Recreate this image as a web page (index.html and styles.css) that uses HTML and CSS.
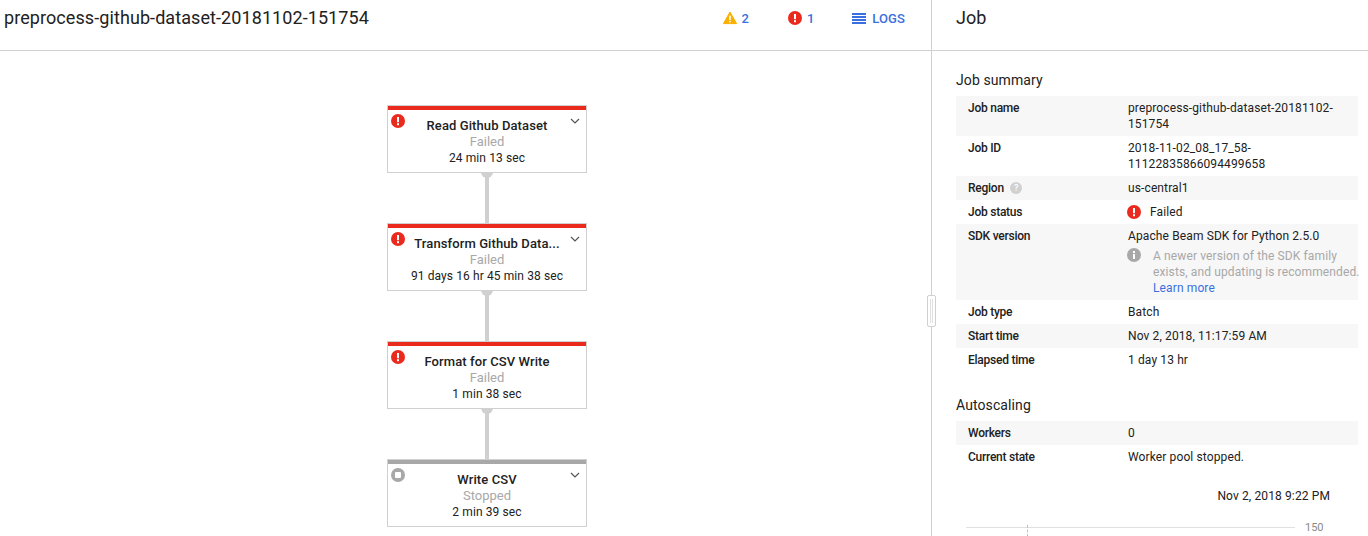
FILE: index.html
```html
<!DOCTYPE html>
<html lang="en">
<head>
    <meta charset="UTF-8">
    <title>Dataflow job</title>
    <link rel="stylesheet" href="styles.css">
</head>
<body>
<div class="page">
    <div class="main">
        <div class="topbar">
            <h1 class="job-title">preprocess-github-dataset-20181102-151754</h1>
            <div class="top-actions">
                <span class="top-item warn-item">
                    <svg class="top-icon" viewBox="0 0 14 14" width="14" height="14"><path d="M7 1 L13.6 12.6 H0.4 Z" fill="#fbb000" stroke="#fbb000" stroke-width="1" stroke-linejoin="round"/><rect x="6.2" y="4.6" width="1.6" height="4.4" fill="#fff"/><rect x="6.2" y="9.8" width="1.6" height="1.6" fill="#fff"/></svg>
                    2
                </span>
                <span class="top-item err-item">
                    <svg class="top-icon" viewBox="0 0 14 14" width="14" height="14"><circle cx="7" cy="7" r="7" fill="#ea2a1c"/><rect x="6" y="3" width="2" height="5.2" fill="#fff"/><rect x="6" y="9.2" width="2" height="2" fill="#fff"/></svg>
                    1
                </span>
                <span class="top-item logs-item">
                    <svg viewBox="0 0 14 11" width="14" height="11"><path d="M0 0h14v2H0zM0 3h14v2H0zM0 6h14v2H0zM0 9h14v2H0z" fill="#3b6fe0"/></svg>
                    LOGS
                </span>
            </div>
        </div>
        <div class="graph">
            <div class="node failed">
                <svg class="node-icon" viewBox="0 0 14 14" width="14" height="14"><circle cx="7" cy="7" r="7" fill="#ea2a1c"/><rect x="6" y="3" width="2" height="5.2" fill="#fff"/><rect x="6" y="9.2" width="2" height="2" fill="#fff"/></svg>
                <svg class="node-chevron" viewBox="0 0 10 6" width="10" height="6"><path d="M1 1 L5 5 L9 1" fill="none" stroke="#555" stroke-width="1.2"/></svg>
                <div class="node-name">Read Github Dataset</div>
                <div class="node-status">Failed</div>
                <div class="node-time">24 min 13 sec</div>
            </div>
            <div class="connector"></div>
            <div class="node failed">
                <svg class="node-icon" viewBox="0 0 14 14" width="14" height="14"><circle cx="7" cy="7" r="7" fill="#ea2a1c"/><rect x="6" y="3" width="2" height="5.2" fill="#fff"/><rect x="6" y="9.2" width="2" height="2" fill="#fff"/></svg>
                <svg class="node-chevron" viewBox="0 0 10 6" width="10" height="6"><path d="M1 1 L5 5 L9 1" fill="none" stroke="#555" stroke-width="1.2"/></svg>
                <div class="node-name">Transform Github Data...</div>
                <div class="node-status">Failed</div>
                <div class="node-time">91 days 16 hr 45 min 38 sec</div>
            </div>
            <div class="connector"></div>
            <div class="node failed">
                <svg class="node-icon" viewBox="0 0 14 14" width="14" height="14"><circle cx="7" cy="7" r="7" fill="#ea2a1c"/><rect x="6" y="3" width="2" height="5.2" fill="#fff"/><rect x="6" y="9.2" width="2" height="2" fill="#fff"/></svg>
                <div class="node-name">Format for CSV Write</div>
                <div class="node-status">Failed</div>
                <div class="node-time">1 min 38 sec</div>
            </div>
            <div class="connector"></div>
            <div class="node stopped">
                <svg class="node-icon" viewBox="0 0 14 14" width="14" height="14"><circle cx="7" cy="7" r="7" fill="#a8a8a8"/><rect x="4" y="4" width="6" height="6" rx="1" fill="#fff"/></svg>
                <svg class="node-chevron" viewBox="0 0 10 6" width="10" height="6"><path d="M1 1 L5 5 L9 1" fill="none" stroke="#555" stroke-width="1.2"/></svg>
                <div class="node-name">Write CSV</div>
                <div class="node-status">Stopped</div>
                <div class="node-time">2 min 39 sec</div>
            </div>
        </div>
    </div>

    <div class="side">
        <div class="resize-handle"></div>
        <div class="side-head">Job</div>
        <div class="side-body">
            <h2 class="section-title">Job summary</h2>
            <div class="info-table">
                <div class="row"><div class="label">Job name</div><div class="value">preprocess-github-dataset-20181102-<br>151754</div></div>
                <div class="row"><div class="label">Job ID</div><div class="value">2018-11-02_08_17_58-<br>11122835866094499658</div></div>
                <div class="row"><div class="label">Region <svg class="help-icon" viewBox="0 0 12 12" width="12" height="12"><circle cx="6" cy="6" r="6" fill="#d0d0d0"/><text x="6" y="9" text-anchor="middle" class="help-mark">?</text></svg></div><div class="value">us-central1</div></div>
                <div class="row"><div class="label">Job status</div><div class="value status-value"><svg viewBox="0 0 14 14" width="14" height="14"><circle cx="7" cy="7" r="7" fill="#ea2a1c"/><rect x="6" y="3" width="2" height="5.2" fill="#fff"/><rect x="6" y="9.2" width="2" height="2" fill="#fff"/></svg>Failed</div></div>
                <div class="row">
                    <div class="label">SDK version</div>
                    <div class="value">
                        Apache Beam SDK for Python 2.5.0
                        <div class="sdk-note">
                            <svg viewBox="0 0 14 14" width="14" height="14"><circle cx="7" cy="7" r="7" fill="#a8a8a8"/><rect x="6" y="6" width="2" height="5" fill="#fff"/><rect x="6" y="3" width="2" height="2" fill="#fff"/></svg>
                            <div><span class="note-text">A newer version of the SDK family<br>exists, and updating is recommended.</span><br><a class="learn-more" href="#">Learn more</a></div>
                        </div>
                    </div>
                </div>
                <div class="row"><div class="label">Job type</div><div class="value">Batch</div></div>
                <div class="row"><div class="label">Start time</div><div class="value">Nov 2, 2018, 11:17:59 AM</div></div>
                <div class="row"><div class="label">Elapsed time</div><div class="value">1 day 13 hr</div></div>
            </div>
            <h2 class="section-title auto-title">Autoscaling</h2>
            <div class="info-table">
                <div class="row"><div class="label">Workers</div><div class="value">0</div></div>
                <div class="row"><div class="label">Current state</div><div class="value">Worker pool stopped.</div></div>
            </div>
            <div class="chart-date">Nov 2, 2018 9:22 PM</div>
            <div class="chart-axis">
                <div class="axis-line"></div>
                <span class="axis-label">150</span>
                <div class="axis-tick"></div>
            </div>
        </div>
    </div>
</div>
</body>
</html>
```

FILE: styles.css
```css
html, body {
    margin: 0;
    height: 100%;
    overflow: hidden;
}

body {
    font-family: Roboto, "Liberation Sans", sans-serif;
    font-size: 12px;
    color: #212121;
    background: #fff;
}

.page {
    display: flex;
    height: 536px;
}

.main {
    width: 931px;
    flex: none;
}

.topbar {
    height: 50px;
    border-bottom: 1px solid #d0d0d0;
    display: flex;
    justify-content: space-between;
    padding-left: 4px;
}

.job-title {
    margin: 8px 0 0;
    font-size: 18px;
    font-weight: 400;
    line-height: 20px;
    letter-spacing: 0.08px;
    color: #212121;
}

.top-actions {
    display: flex;
    align-items: flex-start;
    padding: 11px 26px 0 0;
    color: #3b6fe0;
    font-size: 13px;
    font-weight: 500;
}

.top-item {
    display: flex;
    align-items: center;
    gap: 5px;
    height: 14px;
}

.err-item {
    margin-left: 39px;
}

.logs-item {
    margin-left: 38px;
    gap: 6px;
    letter-spacing: 0.1px;
}

.graph {
    display: flex;
    flex-direction: column;
    align-items: center;
    padding-top: 54px;
    padding-left: 43px;
}

.node {
    position: relative;
    box-sizing: border-box;
    width: 200px;
    height: 68px;
    border: 1px solid #d0d0d0;
    box-shadow: inset 0 4px 0 #ea2a1c;
    text-align: center;
    line-height: 16px;
    padding-top: 12px;
}

.node.stopped {
    box-shadow: inset 0 4px 0 #a8a8a8;
}

.node-icon {
    position: absolute;
    left: 3px;
    top: 8px;
}

.node-chevron {
    position: absolute;
    right: 6px;
    top: 12px;
}

.node-name {
    font-size: 13px;
    font-weight: 500;
    letter-spacing: 0.1px;
}

.node-status {
    font-size: 13px;
    color: #a8a8a8;
}

.node-time {
    letter-spacing: 0.1px;
}

.connector {
    position: relative;
    width: 4px;
    height: 50px;
    background: #d0d0d0;
}

.connector::before {
    content: "";
    position: absolute;
    left: -4px;
    top: -1px;
    width: 12px;
    height: 6px;
    background: #d0d0d0;
    border-radius: 0 0 6px 6px;
}

.side {
    position: relative;
    flex: 1;
    border-left: 1px solid #d0d0d0;
}

.resize-handle {
    position: absolute;
    left: -5px;
    top: 295px;
    width: 7px;
    height: 30px;
    background: #fff;
    border: 1px solid #d0d0d0;
    border-radius: 2px;
}

.resize-handle::after {
    content: "";
    position: absolute;
    left: 2px;
    top: 3px;
    width: 1px;
    height: 24px;
    border-left: 1px solid #e0e0e0;
    border-right: 1px solid #e0e0e0;
}

.side-head {
    height: 50px;
    border-bottom: 1px solid #d0d0d0;
    padding-left: 24px;
    font-size: 18px;
    line-height: 36px;
}

.side-body {
    padding: 0 10px 0 24px;
}

.section-title {
    margin: 0;
    padding-top: 20px;
    height: 25px;
    font-size: 14px;
    font-weight: 400;
    line-height: 18px;
    letter-spacing: 0.1px;
}

.auto-title {
    padding-top: 24px;
}

.row {
    display: grid;
    grid-template-columns: 172px minmax(0, 1fr);
    padding: 4px 0;
    line-height: 16px;
}

.row:nth-child(odd) {
    background: #f7f7f7;
}

.label {
    padding-left: 12px;
    font-weight: 500;
    letter-spacing: -0.25px;
    display: flex;
    align-items: flex-start;
    gap: 6px;
}

.value {
    letter-spacing: 0.12px;
}

.help-icon {
    margin-top: 2px;
}

.help-mark {
    font-size: 9px;
    fill: #fff;
    font-weight: 500;
}

.status-value {
    display: flex;
    align-items: center;
    gap: 9px;
    margin-left: -1px;
}

.sdk-note {
    display: flex;
    gap: 12px;
    margin: 4px 0 0 -1px;
    white-space: nowrap;
}

.sdk-note svg {
    flex: none;
}

.note-text {
    color: #a8a8a8;
}

.learn-more {
    color: #3b6fe0;
    text-decoration: none;
}

.chart-date {
    margin-top: 19px;
    padding-right: 28px;
    text-align: right;
    line-height: 16px;
    letter-spacing: 0.12px;
}

.chart-axis {
    position: relative;
    display: flex;
    align-items: center;
    gap: 10px;
    margin: 15px 0 0 10px;
    height: 16px;
}

.axis-line {
    width: 329px;
    height: 1px;
    background: #e0e0e0;
}

.axis-label {
    font-size: 11px;
    color: #8a8a8a;
}

.axis-tick {
    position: absolute;
    left: 61px;
    top: 6px;
    width: 1px;
    height: 12px;
    border-left: 1px dashed #c0c0c0;
}
```
